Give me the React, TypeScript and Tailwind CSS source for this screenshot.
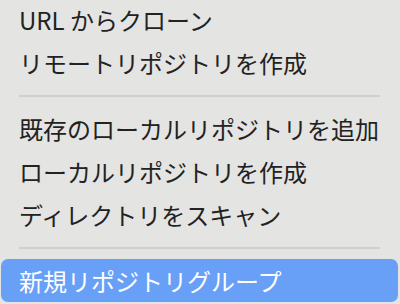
const font = { fontFamily: '"Noto Sans CJK JP", "Noto Sans", sans-serif' };

function Item({ label, active = false }: { label: string; active?: boolean }) {
  return (
    <div
      className={
        'flex h-[43px] items-center rounded-[7px] px-[18px] text-[24px] leading-none ' +
        (active ? 'bg-[#68a0f8] text-white' : 'text-[#222222]')
      }
    >
      {label}
    </div>
  );
}

function Separator() {
  return (
    <div className="flex h-[23px] items-center px-[18px]">
      <div className="h-[2px] w-full bg-[#cfcfce]" />
    </div>
  );
}

export default function App() {
  return (
    <div className="h-[304px] w-[400px] overflow-hidden bg-[#e4e4e3]" style={font}>
      <div className="-mt-[2px] flex flex-col pl-[1px] pr-[2px]">
        <Item label="URL からクローン" />
        <Item label="リモートリポジトリを作成" />
        <Separator />
        <Item label="既存のローカルリポジトリを追加" />
        <Item label="ローカルリポジトリを作成" />
        <Item label="ディレクトリをスキャン" />
        <Separator />
        <Item label="新規リポジトリグループ" active />
      </div>
    </div>
  );
}
